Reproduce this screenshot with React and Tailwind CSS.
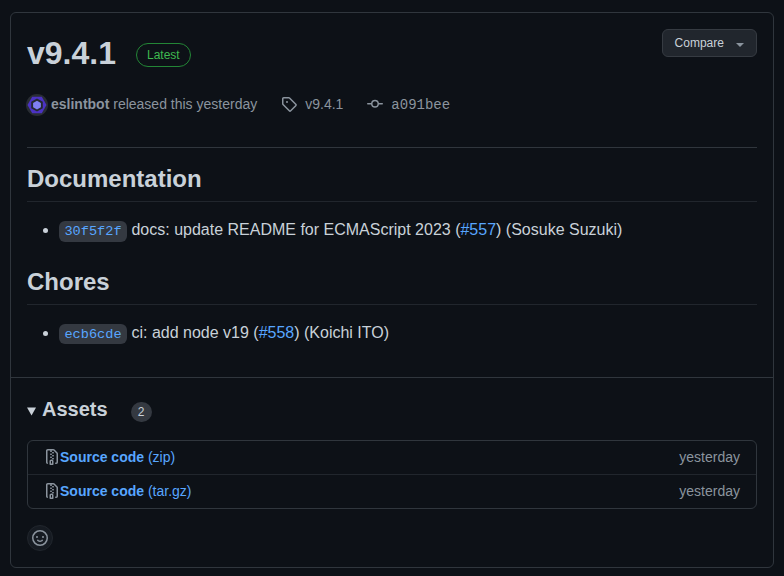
const TAG = 'M1 7.775V2.75C1 1.784 1.784 1 2.75 1h5.025c.464 0 .91.184 1.238.513l6.25 6.25a1.75 1.75 0 0 1 0 2.474l-5.026 5.026a1.75 1.75 0 0 1-2.474 0l-6.25-6.25A1.752 1.752 0 0 1 1 7.775Zm1.5 0c0 .066.026.13.073.177l6.25 6.25a.25.25 0 0 0 .354 0l5.025-5.025a.25.25 0 0 0 0-.354l-6.25-6.25a.25.25 0 0 0-.177-.073H2.75a.25.25 0 0 0-.25.25ZM6 5a1 1 0 1 1 0 2 1 1 0 0 1 0-2Z';
const COMMIT = 'M11.93 8.5a4.002 4.002 0 0 1-7.86 0H.75a.75.75 0 0 1 0-1.5h3.32a4.002 4.002 0 0 1 7.86 0h3.32a.75.75 0 0 1 0 1.5Zm-1.43-.75a2.5 2.5 0 1 0-5 0 2.5 2.5 0 0 0 5 0Z';
const ZIP = 'M3.5 1.75v11.5c0 .09.048.173.126.217a.75.75 0 0 1-.752 1.298A1.748 1.748 0 0 1 2 13.25V1.75C2 .784 2.784 0 3.75 0h5.586c.464 0 .909.185 1.237.513l2.914 2.914c.329.328.513.773.513 1.237v8.586A1.75 1.75 0 0 1 12.25 15h-.5a.75.75 0 0 1 0-1.5h.5a.25.25 0 0 0 .25-.25V4.664a.25.25 0 0 0-.073-.177L9.513 1.573a.25.25 0 0 0-.177-.073H7.25a.75.75 0 0 1 0 1.5h-.5a.75.75 0 0 1 0-1.5h-3a.25.25 0 0 0-.25.25Zm3.75 8.75h.5c.966 0 1.75.784 1.75 1.75v3a.75.75 0 0 1-.75.75h-2.5a.75.75 0 0 1-.75-.75v-3c0-.966.784-1.75 1.75-1.75ZM6 5.25a.75.75 0 0 1 .75-.75h.5a.75.75 0 0 1 0 1.5h-.5A.75.75 0 0 1 6 5.25Zm.75 2.25h.5a.75.75 0 0 1 0 1.5h-.5a.75.75 0 0 1 0-1.5ZM8 6.75A.75.75 0 0 1 8.75 6h.5a.75.75 0 0 1 0 1.5h-.5A.75.75 0 0 1 8 6.75ZM8.75 3h.5a.75.75 0 0 1 0 1.5h-.5a.75.75 0 0 1 0-1.5ZM8 9.75A.75.75 0 0 1 8.75 9h.5a.75.75 0 0 1 0 1.5h-.5A.75.75 0 0 1 8 9.75Zm-1 2.5v2.25h1v-2.25a.25.25 0 0 0-.25-.25h-.5a.25.25 0 0 0-.25.25Z';
const SMILEY = 'M8 0a8 8 0 1 1 0 16A8 8 0 0 1 8 0ZM1.5 8a6.5 6.5 0 1 0 13 0 6.5 6.5 0 0 0-13 0Zm3.82 1.636a.75.75 0 0 1 1.038.175l.007.009c.103.118.22.222.35.31.264.178.683.37 1.285.37.602 0 1.02-.192 1.285-.371.13-.088.247-.192.35-.31l.007-.008a.75.75 0 0 1 1.222.87c-.06.084-.13.162-.205.24-.16.166-.338.316-.53.445-.63.418-1.37.638-2.127.629-.946 0-1.652-.308-2.126-.63a3.331 3.331 0 0 1-.74-.682.75.75 0 0 1 .183-1.044ZM12 7a1 1 0 1 1-2 0 1 1 0 0 1 2 0ZM5 8a1 1 0 1 1 0-2 1 1 0 0 1 0 2Z';

function Icon({ d, className = '' }) {
  return (
    <svg viewBox="0 0 16 16" className={`size-4 shrink-0 fill-[#8b949e] ${className}`}>
      <path fillRule="evenodd" d={d} />
    </svg>
  );
}

function Avatar() {
  return (
    <svg viewBox="0 0 22 22" className="mt-[2px] -ml-px size-[22px] shrink-0">
      <circle cx="11" cy="11" r="11" fill="#292d34" />
      <path d="M6.2 2.7h9.6L20.5 11l-4.7 8.3H6.2L1.5 11Z" fill="#4b32c3" />
      <path d="M11 4.5l5.8 3.3v6.4L11 17.5l-5.8-3.3V7.8Z" fill="#24292f" />
      <path d="M11 6.7l3.9 2.2v4.3L11 15.4l-3.9-2.2V8.9Z" fill="#8080f2" />
    </svg>
  );
}

function Change({ title, hash, text, issue, author }) {
  return (
    <section>
      <h2 className="h-[38.2px] border-b border-[#21262d] text-2xl leading-[30px] font-bold">{title}</h2>
      <ul className="mt-4 h-[24.4px] list-disc pl-8 text-base leading-6">
        <li>
          <code className="rounded-md bg-[#343941] px-[5.44px] py-[2.72px] font-['Liberation_Mono',monospace] text-[13.6px] leading-[1.5] text-[#58a6ff]">{hash}</code>{' '}
          {text} (<a className="text-[#58a6ff]">{issue}</a>) ({author})
        </li>
      </ul>
    </section>
  );
}

function Asset({ ext }) {
  return (
    <li className="flex h-[34px] items-center justify-between border-t border-[#21262d] pr-4 pl-4 first:h-[33px] first:border-t-0">
      <span className="flex items-center text-[#58a6ff]">
        <Icon d={ZIP} className="mb-[2px]" />
        <span><b>Source code</b> ({ext})</span>
      </span>
      <span className="text-[#8b949e]">yesterday</span>
    </li>
  );
}

export default function App() {
  return (
    <main className="h-[576px] bg-[#0d1117] px-[10px] pt-3 font-['Liberation_Sans',Arial,sans-serif] text-sm leading-[21px] text-[#c9d1d9]">
      <article className="h-[556px] rounded-md border border-[#30363d]">
        <div className="h-[365px] border-b border-[#30363d] px-4 pt-4">
          <header className="flex h-12 items-start">
            <h1 className="text-[32px] leading-12 font-bold">v9.4.1</h1>
            <span className="mt-[14px] ml-5 flex h-6 items-center rounded-full border border-[#238636] px-[10px] text-xs leading-[18px] text-[#3fb950]">Latest</span>
            <button className="ml-auto flex h-7 w-[95px] items-center rounded-md border border-[#363b42] bg-[#21262d] pl-[11.6px] text-xs leading-5">
              Compare
              <span className="mt-1 ml-3 border-x-4 border-t-4 border-x-transparent border-t-[#8b949e]" />
            </button>
          </header>
          <div className="mt-[15px] flex h-6 items-center text-[#8b949e]">
            <Avatar />
            <span className="ml-[3px]"><b>eslintbot</b> released this yesterday</span>
            <Icon d={TAG} className="ml-6" />
            <span className="ml-2">v9.4.1</span>
            <Icon d={COMMIT} className="ml-6" />
            <code className="mt-[2px] ml-2 font-['Liberation_Mono',monospace] text-sm">a091bee</code>
          </div>
          <div className="mt-[31px] flex flex-col gap-6 border-t border-[#30363d] pt-4">
            <Change title="Documentation" hash="30f5f2f" text="docs: update README for ECMAScript 2023" issue="#557" author="Sosuke Suzuki" />
            <Change title="Chores" hash="ecb6cde" text="ci: add node v19" issue="#558" author="Koichi ITO" />
          </div>
        </div>
        <div className="px-4 pt-4">
          <div className="flex h-[30px] items-center">
            <svg viewBox="0 0 9 8" className="mt-1 size-[9px] fill-[#c9d1d9]"><path d="M0 0h9L4.5 8Z" /></svg>
            <h3 className="ml-[6px] text-xl leading-[30px] font-bold">Assets</h3>
            <span className="mt-[5px] ml-[23px] flex h-5 w-[21px] items-center justify-center rounded-full bg-[#343941] text-xs leading-[18px]">2</span>
          </div>
          <ul className="mt-4 rounded-md border border-[#30363d]">
            <Asset ext="zip" />
            <Asset ext="tar.gz" />
          </ul>
          <button className="mt-4 flex size-[26px] items-center justify-center rounded-full border border-[#21262d] bg-[#161b22]">
            <Icon d={SMILEY} />
          </button>
        </div>
      </article>
    </main>
  );
}
